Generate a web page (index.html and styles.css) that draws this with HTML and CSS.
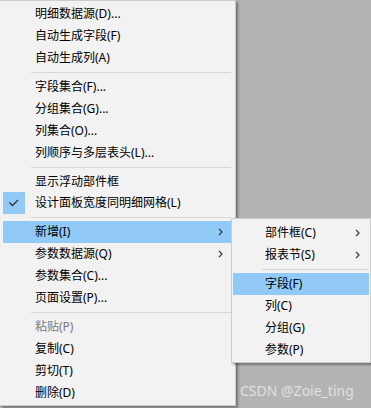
FILE: index.html
```html
<!DOCTYPE html>
<html lang="zh-CN">
<head>
    <meta charset="UTF-8">
    <meta name="viewport" content="width=device-width, initial-scale=1.0">
    <title>报表设计菜单</title>
    <link rel="stylesheet" href="styles.css">
</head>
<body>

<div class="screen">
    <div class="menu main-menu">
        <div class="item">明细数据源(D)...</div>
        <div class="item">自动生成字段(F)</div>
        <div class="item">自动生成列(A)</div>
        <div class="sep"></div>
        <div class="item">字段集合(F)...</div>
        <div class="item">分组集合(G)...</div>
        <div class="item">列集合(O)...</div>
        <div class="item">列顺序与多层表头(L)...</div>
        <div class="sep"></div>
        <div class="item">显示浮动部件框</div>
        <div class="item checked">
            <span class="check">
                <svg width="22" height="22" viewBox="0 0 22 22"><path d="M6.5 10.5 L9.5 13.5 L15 8" fill="none" stroke="#333" stroke-width="1.3"/></svg>
            </span>
            设计面板宽度同明细网格(L)
        </div>
        <div class="sep"></div>
        <div class="item active">新增(I)
            <svg class="arrow" width="5" height="8" viewBox="0 0 5 8"><path d="M1 0.8 L4 4 L1 7.2" fill="none" stroke="#333" stroke-width="1.2"/></svg>
        </div>
        <div class="item">参数数据源(Q)
            <svg class="arrow" width="5" height="8" viewBox="0 0 5 8"><path d="M1 0.8 L4 4 L1 7.2" fill="none" stroke="#333" stroke-width="1.2"/></svg>
        </div>
        <div class="item">参数集合(C)...</div>
        <div class="item">页面设置(P)...</div>
        <div class="sep"></div>
        <div class="item disabled">粘贴(P)</div>
        <div class="item">复制(C)</div>
        <div class="item">剪切(T)</div>
        <div class="item">删除(D)</div>
    </div>

    <div class="menu sub-menu">
        <div class="item">部件框(C)
            <svg class="arrow" width="5" height="8" viewBox="0 0 5 8"><path d="M1 0.8 L4 4 L1 7.2" fill="none" stroke="#333" stroke-width="1.2"/></svg>
        </div>
        <div class="item">报表节(S)
            <svg class="arrow" width="5" height="8" viewBox="0 0 5 8"><path d="M1 0.8 L4 4 L1 7.2" fill="none" stroke="#333" stroke-width="1.2"/></svg>
        </div>
        <div class="sep"></div>
        <div class="item active">字段(F)</div>
        <div class="item">列(C)</div>
        <div class="item">分组(G)</div>
        <div class="item">参数(P)</div>
    </div>

    <div class="watermark">CSDN @Zoie_ting</div>
</div>

</body>
</html>
```

FILE: styles.css
```css
body {
    margin: 0;
    background-color: #b4b4b4;
    font-family: "Noto Sans", "Noto Sans CJK SC", sans-serif;
    font-size: 12px;
    color: #000;
    overflow: hidden;
}
.screen {
    position: relative;
    width: 371px;
    height: 408px;
    overflow: hidden;
}
.menu {
    background-color: #f2f2f2;
    border: 1px solid #cccccc;
    box-sizing: border-box;
}
.main-menu {
    width: 236px;
    border-left: none;
    padding: 2px 4px 1px 3px;
    box-shadow: 2px 2px 2px rgba(0, 0, 0, 0.35);
}
.sub-menu {
    position: absolute;
    left: 231px;
    top: 218px;
    width: 140px;
    padding: 3px 1px 1px 1px;
    box-shadow: 2px 2px 2px rgba(0, 0, 0, 0.35);
}
.item {
    height: 22px;
    line-height: 22px;
    display: flex;
    align-items: center;
    padding-left: 32px;
    white-space: nowrap;
}
.item.active {
    background-color: #91c9f7;
}
.item.disabled {
    color: #7a7a7a;
}
.item.checked {
    padding-left: 0;
    margin-top: -1px;
    margin-bottom: 1px;
}
.check {
    display: block;
    width: 22px;
    height: 22px;
    margin-right: 10px;
    background-color: #91c9f7;
}
.check svg {
    display: block;
}
.arrow {
    margin-left: auto;
    margin-right: 8px;
}
.sub-menu .arrow {
    margin-right: 9px;
}
.sep {
    height: 1px;
    margin: 3px 0 3px 28px;
    background-color: #d7d7d7;
}
.sub-menu .sep {
    margin-left: 29px;
}
.watermark {
    position: absolute;
    left: 240px;
    top: 381px;
    font-size: 14px;
    color: rgba(255, 255, 255, 0.6);
    line-height: 20px;
}
```
